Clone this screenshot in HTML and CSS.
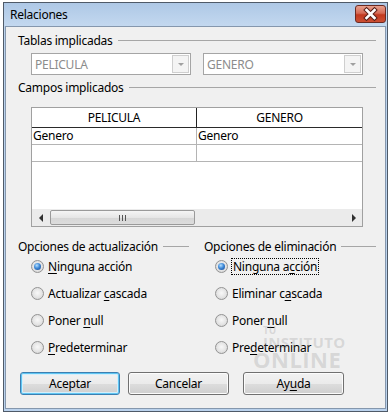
FILE: index.html
```html
<!DOCTYPE html>
<html lang="es">
<head>
<meta charset="utf-8">
<title>Relaciones</title>
<link rel="stylesheet" href="styles.css">
</head>
<body>
<div class="window">
  <div class="titlebar">
    <span class="title">Relaciones</span>
    <span class="close">
      <svg width="31" height="18" viewBox="0 0 31 18">
        <path d="M11.5 5 L19.5 13 M19.5 5 L11.5 13" stroke="#5b2018" stroke-width="4.6" stroke-linecap="square"/>
        <path d="M11.5 5 L19.5 13 M19.5 5 L11.5 13" stroke="#ffffff" stroke-width="2.6" stroke-linecap="square"/>
      </svg>
    </span>
  </div>
  <div class="client">
    <div class="group-head"><span>Tablas implicadas</span></div>
    <div class="combos">
      <div class="combo"><span class="combo-text">PELICULA</span><span class="drop"><span class="tri"></span></span></div>
      <div class="combo"><span class="combo-text">GENERO</span><span class="drop"><span class="tri"></span></span></div>
    </div>
    <div class="group-head"><span>Campos implicados</span></div>
    <div class="grid">
      <div class="grid-head"><div class="hcell first">PELICULA</div><div class="hcell">GENERO</div></div>
      <div class="grid-row"><div class="cell first">Genero</div><div class="cell">Genero</div></div>
      <div class="grid-row"><div class="cell first"></div><div class="cell"></div></div>
      <div class="grid-empty"></div>
      <div class="hscroll">
        <span class="arrow left"></span>
        <div class="track"><div class="thumb"><span class="grip"></span></div></div>
        <span class="arrow right"></span>
      </div>
    </div>
    <div class="options">
      <div class="opt-col">
        <div class="group-head small"><span>Opciones de actualización</span></div>
        <div class="radio checked"><span class="dot"></span><span class="label"><u>N</u>inguna acción</span></div>
        <div class="radio"><span class="dot"></span><span class="label">Actualizar <u>c</u>ascada</span></div>
        <div class="radio"><span class="dot"></span><span class="label">Poner <u>n</u>ull</span></div>
        <div class="radio"><span class="dot"></span><span class="label"><u>P</u>redeterminar</span></div>
      </div>
      <div class="opt-col right">
        <div class="group-head small"><span>Opciones de eliminación</span></div>
        <div class="radio checked"><span class="dot"></span><span class="label focus">Ninguna a<u>c</u>ción</span></div>
        <div class="radio"><span class="dot"></span><span class="label">Eliminar c<u>a</u>scada</span></div>
        <div class="radio"><span class="dot"></span><span class="label">Poner <u>n</u>ull</span></div>
        <div class="radio"><span class="dot"></span><span class="label">Pre<u>d</u>eterminar</span></div>
      </div>
    </div>
    <div class="buttons">
      <span class="btn default">Aceptar</span>
      <span class="btn cancel">Cancelar</span>
      <span class="btn help">Ay<u>u</u>da</span>
    </div>
  </div>
  <div class="watermark">
    <span class="wm-tu">TU</span>
    <span class="wm-inst">INSTITUTO</span>
    <span class="wm-online">ONLINE</span>
  </div>
</div>
</body>
</html>
```

FILE: styles.css
```css
* { box-sizing: border-box; }
html, body { margin: 0; padding: 0; }
body {
  width: 392px;
  height: 412px;
  overflow: hidden;
  background: #ffffff;
  font-family: "Noto Sans", "Open Sans", sans-serif;
  font-size: 12px;
  letter-spacing: -0.25px;
  color: #000;
}
u { text-decoration: underline; text-underline-offset: 2px; }

.window {
  position: relative;
  margin: 2px 0 0 3px;
  width: 385px;
  height: 410px;
  border: 1px solid #4f5a68;
  background: #bad2ed;
  display: flex;
  flex-direction: column;
}
.titlebar {
  height: 23px;
  flex: none;
  background: linear-gradient(#aec8e6, #c3d8ef);
  display: flex;
  align-items: flex-start;
  justify-content: space-between;
  padding: 0 1px 0 6px;
}
.title { line-height: 23px; font-size: 12px; }
.close {
  margin-top: 2px;
  width: 31px;
  height: 18px;
  border: 1px solid #6b2a22;
  border-radius: 3px;
  background: linear-gradient(#e8a08e 0%, #d56a55 45%, #c2391f 55%, #cc4f33 100%);
  display: block;
  overflow: hidden;
}
.close svg { display: block; margin: -1px 0 0 -1px; }

.client {
  flex: 1;
  margin: 0 1px 2px 1px;
  background: #f0f0f0;
  border: 1px solid #8597ad;
  padding: 0 9px 0 12px;
}

.group-head {
  margin-top: 6px;
  height: 15px;
  line-height: 15px;
  display: flex;
  align-items: center;
  white-space: nowrap;
}
.group-head::after {
  content: "";
  flex: 1;
  height: 1px;
  margin-left: 5px;
  background: #a6a6a6;
}
.group-head.small { margin-top: 0; height: 13px; line-height: 13px; }

.combos {
  margin-top: 5px;
  padding-left: 13px;
  display: flex;
  gap: 12px;
}
.combo {
  width: 160px;
  height: 22px;
  border: 1px solid #a5a5a5;
  background: #fff;
  display: flex;
  align-items: center;
  justify-content: space-between;
  padding: 0 1px 0 3px;
}
.combo-text { color: #8c8c8c; }
.drop {
  width: 17px;
  height: 18px;
  border: 1px solid #cfcfcf;
  background: #f4f4f4;
  display: flex;
  align-items: center;
  justify-content: center;
}
.tri {
  width: 0; height: 0;
  border-left: 3px solid transparent;
  border-right: 3px solid transparent;
  border-top: 3px solid #a0a0a0;
}
.combos + .group-head { margin-top: 5px; }

.grid {
  margin: 12px 0 0 13px;
  width: 332px;
  height: 120px;
  border: 1px solid #a0a0a0;
  background: #fff;
  display: flex;
  flex-direction: column;
}
.grid-head, .grid-row {
  display: grid;
  grid-template-columns: 165px 1fr;
  flex: none;
}
.grid-head { height: 20px; border-bottom: 1px solid #2a2a2a; background: #fff; }
.hcell { text-align: center; line-height: 19px; }
.hcell.first { border-right: 1px solid #222; }
.grid-row { height: 17px; border-bottom: 1px solid #b4b4b4; }
.cell { line-height: 16px; padding-left: 1px; }
.cell.first { border-right: 1px solid #b4b4b4; }
.grid-empty { flex: 1; }
.hscroll {
  height: 17px;
  flex: none;
  background: #ebebeb;
  display: flex;
  align-items: center;
}
.arrow {
  width: 17px;
  height: 17px;
  display: flex;
  align-items: center;
  justify-content: center;
}
.arrow::before {
  content: "";
  width: 0; height: 0;
  border-top: 4px solid transparent;
  border-bottom: 4px solid transparent;
}
.arrow.left::before { border-right: 4px solid #303030; }
.arrow.right::before { border-left: 4px solid #303030; }
.track { flex: 1; height: 17px; padding: 1px 0; }
.thumb {
  margin-left: 1px;
  width: 145px;
  height: 15px;
  border: 1px solid #9a9a9a;
  border-radius: 2px;
  background: linear-gradient(#f5f5f5, #e6e6e6 50%, #d6d6d6 51%, #dcdcdc);
  display: flex;
  align-items: center;
  justify-content: center;
}
.grip {
  width: 7px;
  height: 6px;
  background: repeating-linear-gradient(90deg, #555 0 1px, transparent 1px 3px);
}

.options {
  margin-top: 13px;
  display: grid;
  grid-template-columns: 171px 1fr;
  column-gap: 15px;
}
.radio {
  height: 27px;
  display: flex;
  align-items: center;
  padding-left: 13px;
  gap: 4px;
}
.opt-col.right .radio { padding-left: 11px; }
.dot {
  width: 13px;
  height: 13px;
  border-radius: 50%;
  border: 1px solid #939393;
  background: radial-gradient(circle at 50% 45%, #f8f8f8 0, #e4e4e4 55%, #cbcbcb 100%);
  display: flex;
  align-items: center;
  justify-content: center;
  flex: none;
}
.radio.checked .dot::after {
  content: "";
  width: 7px;
  height: 7px;
  border-radius: 50%;
  background: radial-gradient(circle at 40% 35%, #b6e0ff 0, #3f8ad8 45%, #153f86 100%);
}
.label { line-height: 15px; }
.label.focus { outline: 1px dotted #000; outline-offset: 0; padding: 0 1px; }

.buttons {
  margin-top: 11px;
  padding-left: 2px;
  display: flex;
}
.btn {
  width: 101px;
  height: 23px;
  border: 1px solid #707070;
  border-radius: 3px;
  background: linear-gradient(#f2f2f2 0%, #ebebeb 50%, #dddddd 51%, #cfcfcf 100%);
  box-shadow: inset 0 0 0 1px #fcfcfc;
  display: flex;
  align-items: center;
  justify-content: center;
}
.btn.default {
  width: 100px;
  border-color: #3c7fb1;
  box-shadow: inset 0 0 0 1px #5ec5f2, inset 0 0 0 2px #d4eefb;
}
.btn.cancel { margin-left: 8px; }
.btn.help { margin-left: 14px; }

.watermark {
  position: absolute;
  left: 249px;
  top: 322px;
  width: 100px;
  display: flex;
  flex-direction: column;
  font-family: "Open Sans", sans-serif;
  font-weight: 700;
  letter-spacing: 0;
  color: rgba(140, 140, 140, 0.26);
  pointer-events: none;
}
.wm-tu { font-size: 10px; line-height: 10px; margin-left: 10px; }
.wm-inst { font-size: 15px; line-height: 14px; margin-left: 10px; letter-spacing: 0.3px; }
.wm-online { font-size: 22px; line-height: 20px; letter-spacing: 0.5px; }
```
